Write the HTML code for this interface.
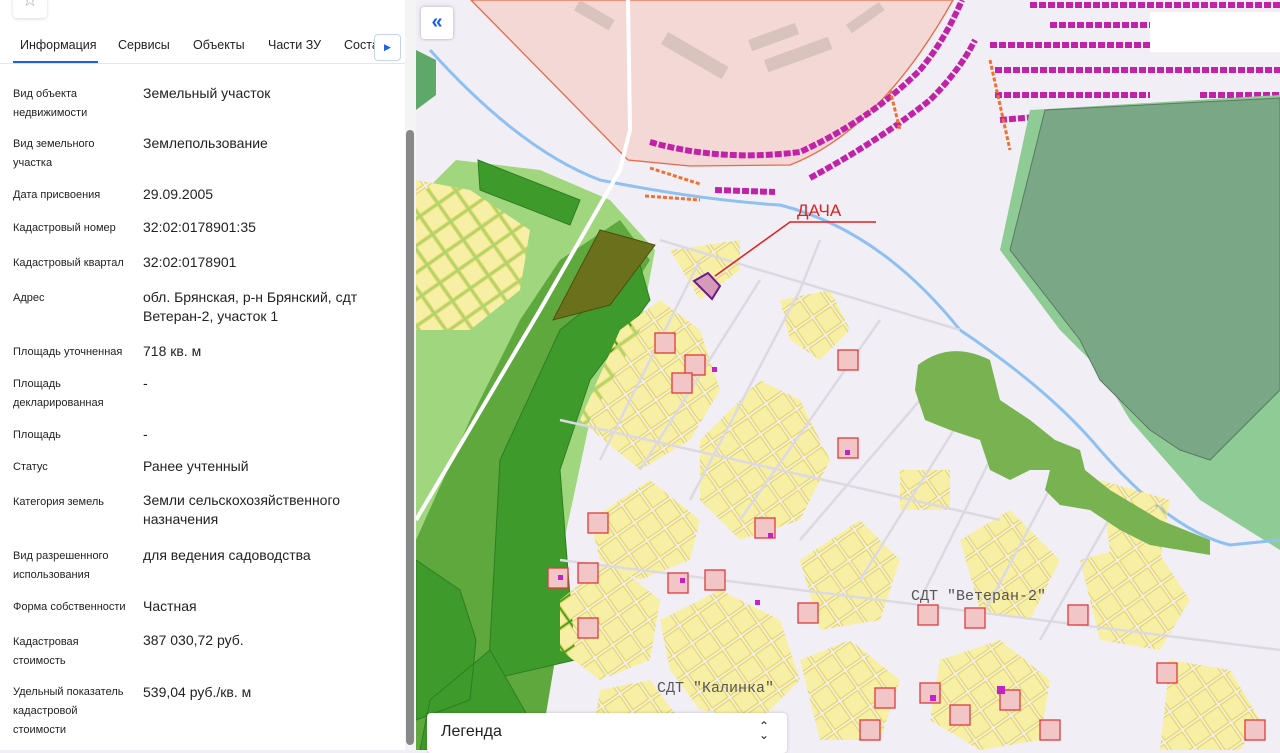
<!DOCTYPE html>
<html><head><meta charset="utf-8"><style>
*{margin:0;padding:0;box-sizing:border-box}
body{width:1280px;height:750px;overflow:hidden;position:relative;font-family:"Liberation Sans",Arial,sans-serif;background:#f1eff5}
#map{position:absolute;left:0;top:0}
#panel{position:absolute;left:0;top:0;width:416px;height:750px;background:#fff;border-right:1px solid #ddd}
.l{position:absolute;left:13px;font-size:11px;line-height:19px;color:#222;width:125px}
.v{position:absolute;left:143px;font-size:14px;line-height:19px;color:#222}
.tab{position:absolute;top:38px;font-size:12.5px;color:#222}
</style></head><body>
<svg id="map" width="1280" height="750" viewBox="0 0 1280 750">
<defs>
<pattern id="yp" width="22" height="22" patternUnits="userSpaceOnUse" patternTransform="rotate(-35)">
<rect x="1.5" y="1.5" width="19" height="19" fill="#f8efa6" stroke="#e6d65a" stroke-width="1.2"/>
</pattern>
<clipPath id="yc">
<path d="M580 420 L620 330 L660 300 L700 330 L720 390 L690 440 L640 470 Z"/>
<path d="M700 440 L760 380 L800 400 L830 460 L800 520 L740 540 L700 500 Z"/>
<path d="M590 520 L650 480 L700 520 L690 560 L640 580 L600 560 Z"/>
<path d="M560 600 L610 560 L660 600 L650 660 L600 680 L560 650 Z"/>
<path d="M660 620 L720 590 L780 620 L800 680 L760 720 L700 710 L670 670 Z"/>
<path d="M800 560 L860 520 L900 560 L880 620 L820 630 Z"/>
<path d="M960 540 L1010 510 L1060 560 L1030 620 L980 610 Z"/>
<path d="M1080 560 L1150 540 L1190 600 L1160 650 L1100 640 Z"/>
<path d="M1170 660 L1230 670 L1260 720 L1240 750 L1160 750 Z"/>
<path d="M940 660 L1000 640 L1050 680 L1040 740 L980 750 L930 720 Z"/>
<path d="M800 660 L850 640 L900 680 L880 740 L820 740 Z"/>
<path d="M600 690 L650 680 L680 720 L660 750 L590 750 Z"/>
<path d="M780 300 L830 290 L850 330 L820 360 L790 340 Z"/>
<path d="M670 250 L740 240 L740 270 L700 300 Z"/>
<path d="M416 180 L470 190 L530 230 L520 290 L470 330 L416 330 Z"/>
<path d="M900 470 L950 470 L950 510 L900 510 Z"/>
<path d="M1100 480 L1170 500 L1160 560 L1110 550 Z"/>
</clipPath>
</defs>
<rect width="1280" height="750" fill="#f1eff5"/>
<path d="M471 0 L628 160 L690 166 L790 165 Q880 130 953 0 Z" fill="#f4d8d6" stroke="#e66a4a" stroke-width="1.3"/>
<g fill="#d9c3bd"><rect x="668" y="32" width="70" height="14" transform="rotate(30 668 32)"/><rect x="748" y="40" width="50" height="12" transform="rotate(-20 748 40)"/><rect x="764" y="60" width="68" height="13" transform="rotate(-20 764 60)"/><rect x="846" y="25" width="40" height="10" transform="rotate(-35 846 25)"/><rect x="580" y="0" width="40" height="12" transform="rotate(30 580 0)"/></g>
<g fill="none" stroke="#c222a8" stroke-width="6" stroke-dasharray="7 2">
<path d="M650 142 Q720 162 800 152 Q870 120 920 70 Q945 40 962 0"/>
<path d="M810 178 Q880 140 930 100 Q960 70 975 40"/>
<path d="M990 45 L1280 45 M995 70 L1280 70 M995 95 L1150 95 M1200 95 L1280 95 M1030 5 L1280 5 M1050 25 L1280 25 M1000 120 L1120 110 M1200 120 L1280 115"/>
<path d="M715 190 L775 192"/>
</g>
<g fill="none" stroke="#f07030" stroke-width="3" stroke-dasharray="4 2">
<path d="M650 168 L700 184 M645 196 L700 200 M990 60 L1010 150 M890 90 L900 130 M1040 130 L1100 125"/>
</g>
<rect x="1150" y="12" width="130" height="40" fill="#fff"/>
<path d="M1030 110 L1280 95 L1280 550 L1200 500 L1130 420 L1100 370 L1060 330 L1000 250 Z" fill="#8fcc95"/>
<path d="M1045 110 L1280 98 L1280 390 L1250 420 L1210 460 L1180 450 L1150 430 L1100 380 L1080 340 L1010 250 Z" fill="#7aa886" stroke="#597a63" stroke-width="1"/>
<path d="M430 50 Q520 150 600 180 Q700 200 780 205 Q880 230 960 330 Q1050 390 1100 450 Q1170 530 1230 545 L1280 540" fill="none" stroke="#8ec0f0" stroke-width="3"/>
<path d="M416 200 L456 160 L540 170 L610 200 L655 250 L640 330 L590 420 L560 560 L540 750 L416 750 Z" fill="#9fd67e"/>
<path d="M416 540 L470 420 L520 320 L560 260 L620 220 L650 260 L600 340 L560 460 L555 660 L540 750 L416 750 Z" fill="#5ea83e"/>
<path d="M488 680 L500 460 L560 330 L640 265 L650 300 L590 380 L560 470 L575 660 Z" fill="#3e9b2b" stroke="#2e7d20" stroke-width="1"/>
<path d="M416 560 L460 590 L476 640 L470 700 L416 720 Z M430 700 L490 650 L530 720 L520 750 L420 750 Z" fill="#3e9b2b" stroke="#2e7d20"/>
<path d="M478 160 L580 200 L570 225 L480 190 Z" fill="#3e9b2b" stroke="#2e7d20"/>
<path d="M553 320 L600 230 L655 245 L610 305 Z" fill="#6b701c" stroke="#4d4f10" stroke-width="1"/>
<path d="M416 50 L436 60 L436 95 L416 110 Z" fill="#5ea86a"/>
<path d="M416 520 L540 310 L620 170 L630 130 L628 0" fill="none" stroke="#fff" stroke-width="4"/>
<rect width="1280" height="750" fill="url(#yp)" clip-path="url(#yc)"/>
<g stroke="#dcd9e3" stroke-width="2.5" fill="none">
<path d="M600 460 L700 260 M640 470 L760 280 M690 500 L800 290 M740 520 L880 320 M800 540 L920 400 M860 580 L960 420 M920 600 L1000 440 M980 620 L1060 470 M1040 640 L1120 500"/>
<path d="M560 560 L1280 650 M560 420 L1000 520 M660 240 L960 330 M820 240 L800 290"/>
</g>
<path d="M918 365 Q950 340 990 360 L1000 400 L1030 420 L1055 440 L1080 450 L1085 470 L1110 490 L1160 520 L1210 540 L1210 555 L1150 545 L1120 530 L1090 510 L1060 505 L1045 490 L1050 470 L1030 470 L1010 480 L990 470 L980 440 L950 430 L925 420 L915 390 Z" fill="#78b251"/>
<g fill="#f2c6c6" stroke="#e03a3a" stroke-width="1.3">
<rect x="655" y="333" width="20" height="20"/><rect x="685" y="355" width="20" height="20"/><rect x="672" y="373" width="20" height="20"/><rect x="838" y="350" width="20" height="20"/><rect x="838" y="438" width="20" height="20"/><rect x="588" y="513" width="20" height="20"/><rect x="755" y="518" width="20" height="20"/><rect x="548" y="568" width="20" height="20"/><rect x="578" y="563" width="20" height="20"/><rect x="668" y="573" width="20" height="20"/><rect x="705" y="570" width="20" height="20"/><rect x="578" y="618" width="20" height="20"/><rect x="798" y="603" width="20" height="20"/><rect x="918" y="605" width="20" height="20"/><rect x="965" y="608" width="20" height="20"/><rect x="1068" y="605" width="20" height="20"/><rect x="875" y="688" width="20" height="20"/><rect x="920" y="683" width="20" height="20"/><rect x="1040" y="720" width="20" height="20"/><rect x="1157" y="663" width="20" height="20"/><rect x="860" y="720" width="20" height="20"/><rect x="950" y="705" width="20" height="20"/><rect x="1000" y="690" width="20" height="20"/><rect x="1245" y="720" width="20" height="20"/>
</g>
<g fill="#c222c8"><rect x="712" y="367" width="5" height="5"/><rect x="768" y="533" width="5" height="5"/><rect x="558" y="575" width="5" height="5"/><rect x="680" y="578" width="5" height="5"/><rect x="755" y="600" width="5" height="5"/><rect x="930" y="695" width="6" height="6"/><rect x="997" y="686" width="8" height="8"/><rect x="845" y="450" width="5" height="5"/></g>
<path d="M694 281 L708 273 L720 286 L712 299 Z" fill="#d69ab8" stroke="#6a1a8a" stroke-width="2"/>
<path d="M715 276 L790 222 L876 222" fill="none" stroke="#e02020" stroke-width="1.5"/>
<text x="797" y="216" font-size="17" fill="#e02020" font-family="Liberation Sans,sans-serif">ДАЧА</text>
<text x="911" y="600" font-size="15" fill="#555" font-family="Liberation Mono,monospace">СДТ "Ветеран-2"</text>
<text x="657" y="692" font-size="15" fill="#555" font-family="Liberation Mono,monospace">СДТ "Калинка"</text>
</svg>
<div style="position:absolute;left:421px;top:7px;width:32px;height:32px;background:#fff;border-radius:3px;box-shadow:0 0 3px rgba(0,0,0,.3);color:#1a5ef0;font-size:20px;text-align:center;line-height:30px;font-weight:bold">«</div>
<div style="position:absolute;left:427px;top:713px;width:360px;height:40px;background:#fff;border-radius:4px;box-shadow:0 0 3px rgba(0,0,0,.2);font-size:16px;padding:10px 14px;color:#222">Легенда<span style="position:absolute;right:18px;top:9px;font-size:12px;line-height:9px;width:10px;text-align:center">⌃<br>⌄</span></div>
<div id="panel">
<div style="position:absolute;left:13px;top:-12px;width:34px;height:30px;border-radius:4px;box-shadow:0 1px 3px rgba(0,0,0,.15);text-align:center;color:#aaa;font-size:18px;line-height:24px">☆</div>
<div class="tab" style="left:20px">Информация</div>
<div class="tab" style="left:118px">Сервисы</div>
<div class="tab" style="left:193px">Объекты</div>
<div class="tab" style="left:268px">Части ЗУ</div>
<div class="tab" style="left:344px">Соста</div>
<div style="position:absolute;left:374px;top:34px;width:27px;height:27px;background:#fff;border:1px solid #c8d4ee;border-radius:4px;color:#1a5ef0;font-size:9px;text-align:center;line-height:25px">▶</div>
<div style="position:absolute;left:0;top:63px;width:405px;height:1px;background:#e6e6e6"></div>
<div style="position:absolute;left:13px;top:61px;width:85px;height:2px;background:#1a5ef0"></div>
<div style="position:absolute;left:405px;top:0;width:11px;height:750px;background:#f4f4f4"></div>
<div style="position:absolute;left:406px;top:130px;width:8px;height:615px;background:#888;border-radius:4px"></div>
<div class="l" style="top:85px">Вид объекта<br>недвижимости</div><div class="v" style="top:84px">Земельный участок</div>
<div class="l" style="top:135px">Вид земельного<br>участка</div><div class="v" style="top:134px">Землепользование</div>
<div class="l" style="top:186px">Дата присвоения</div><div class="v" style="top:185px">29.09.2005</div>
<div class="l" style="top:219px">Кадастровый номер</div><div class="v" style="top:218px">32:02:0178901:35</div>
<div class="l" style="top:254px">Кадастровый квартал</div><div class="v" style="top:253px">32:02:0178901</div>
<div class="l" style="top:289px">Адрес</div><div class="v" style="top:288px">обл. Брянская, р-н Брянский, сдт<br>Ветеран-2, участок 1</div>
<div class="l" style="top:343px">Площадь уточненная</div><div class="v" style="top:342px">718 кв. м</div>
<div class="l" style="top:375px">Площадь<br>декларированная</div><div class="v" style="top:374px">-</div>
<div class="l" style="top:426px">Площадь</div><div class="v" style="top:425px">-</div>
<div class="l" style="top:458px">Статус</div><div class="v" style="top:457px">Ранее учтенный</div>
<div class="l" style="top:493px">Категория земель</div><div class="v" style="top:491px">Земли сельскохозяйственного<br>назначения</div>
<div class="l" style="top:547px">Вид разрешенного<br>использования</div><div class="v" style="top:546px">для ведения садоводства</div>
<div class="l" style="top:598px">Форма собственности</div><div class="v" style="top:597px">Частная</div>
<div class="l" style="top:633px">Кадастровая<br>стоимость</div><div class="v" style="top:631px">387 030,72 руб.</div>
<div class="l" style="top:683px">Удельный показатель<br>кадастровой<br>стоимости</div><div class="v" style="top:683px">539,04 руб./кв. м</div>
</div>
</body></html>
